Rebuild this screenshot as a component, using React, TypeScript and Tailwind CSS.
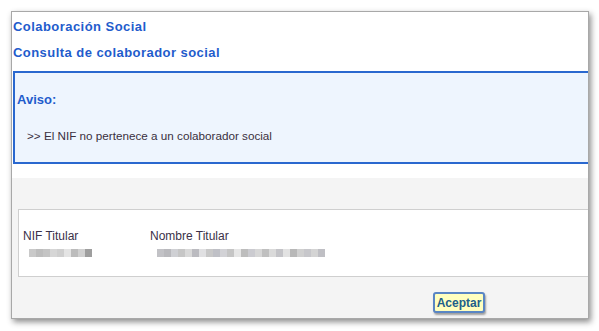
import React from "react";

const blurA = ["#c9c9c9", "#bdbdbd", "#c4c4c4", "#d6d6d6", "#cfcfcf", "#e4e4e4", "#bcbcbc", "#d0d0d0", "#9e9e9e"];
const blurB = [
  "#c2c2c6", "#b9b9bd", "#cfd0d4", "#c6c6c6", "#d9d9d9", "#bbbbc0", "#e0e0e2", "#c8c8c8",
  "#bfc0c6", "#d2d2d6", "#c5c5c5", "#e6e6e6", "#bdbdbd", "#cbcbd0", "#d7d7d7", "#c0c0c0",
  "#dadada", "#c4c4c8", "#e2e2e2", "#b8b8b8", "#d0d0d0", "#c7c7cb", "#d4d4d4", "#bfbfc4",
];

const Blur = ({ cells }: { cells: string[] }) => (
  <div className="flex h-[8px]">
    {cells.map((c, i) => (
      <span key={i} className="h-full w-[7px]" style={{ backgroundColor: c }} />
    ))}
  </div>
);

const App = () => {
  return (
    <div className="h-[331px] w-[599px] bg-white pl-[11px] pt-[11px] font-['Liberation_Sans',Arial,sans-serif]">
      <div className="flex h-[308px] w-[578px] flex-col overflow-hidden border border-[#a8a8a8] bg-white shadow-[2px_3px_6px_rgba(0,0,0,0.45)]">
        <div className="pl-[1px] pt-[2px]">
          <div className="flex h-[26px] items-center text-[13px] font-bold tracking-[0.45px] text-[#1f5ccc]">
            Colaboración Social
          </div>
          <div className="flex h-[26px] items-center text-[13px] font-bold tracking-[0.45px] text-[#1f5ccc]">
            Consulta de colaborador social
          </div>
          <div className="-mr-[4px] mt-[5px] h-[93px] border-2 border-[#2a68cf] bg-[#eef5fe]">
            <div className="flex h-[54px] items-center pl-[2px] text-[13px] font-bold text-[#1f5ccc]">
              Aviso:
            </div>
            <div className="pl-[12px] text-[11.7px] text-[#3a3040]">
              &gt;&gt; El NIF no pertenece a un colaborador social
            </div>
          </div>
        </div>
        <div className="mt-[14px] flex flex-1 flex-col bg-[#f4f4f4] pl-[6px] pt-[31px]">
          <div className="-mr-[4px] h-[68px] border border-[#cfcfcf] bg-white">
            <div className="flex pt-[17px]">
              <div className="w-[131px] pl-[4px]">
                <div className="text-[12px] text-[#3a3048]">NIF Titular</div>
                <div className="mt-[4px] pl-[6px]">
                  <Blur cells={blurA} />
                </div>
              </div>
              <div>
                <div className="text-[12px] text-[#3a3048]">Nombre Titular</div>
                <div className="mt-[4px] pl-[7px]">
                  <Blur cells={blurB} />
                </div>
              </div>
            </div>
          </div>
          <div className="mt-[13px] pl-[415px]">
            <button className="h-[21px] w-[52px] rounded-[3px] border-2 border-[#5a86c4] bg-[#ffffbf] text-[12px] font-bold text-[#20608a] shadow-[1px_2px_2px_rgba(0,0,0,0.35)]">
              Aceptar
            </button>
          </div>
        </div>
      </div>
    </div>
  );
};

export default App;
